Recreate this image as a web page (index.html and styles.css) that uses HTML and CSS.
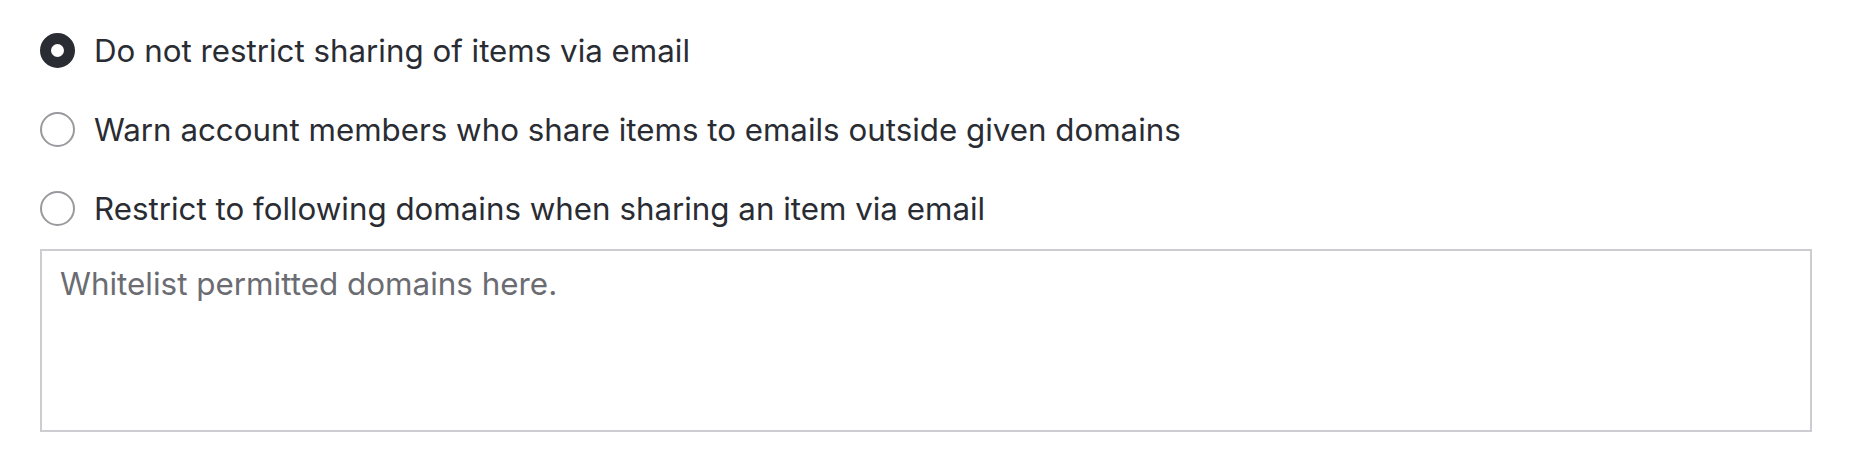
FILE: index.html
```html
<!DOCTYPE html>
<html>
<head>
<meta charset="utf-8">
<link rel="stylesheet" href="styles.css">
</head>
<body>
<div class="options">
  <label class="option">
    <span class="radio radio-checked"></span>
    <span class="label">Do not restrict sharing of items via email</span>
  </label>
  <label class="option">
    <span class="radio"></span>
    <span class="label">Warn account members who share items to emails outside given domains</span>
  </label>
  <label class="option">
    <span class="radio"></span>
    <span class="label">Restrict to following domains when sharing an item via email</span>
  </label>
  <textarea class="domains" placeholder="Whitelist permitted domains here."></textarea>
</div>
</body>
</html>
```

FILE: styles.css
```css
html, body {
  margin: 0;
  padding: 0;
  background: #ffffff;
}
body {
  font-family: Inter, "Noto Sans", sans-serif;
  color: #2a2c33;
}
.options {
  display: flex;
  flex-direction: column;
  padding: 11px 40px 0 40px;
}
.option {
  display: flex;
  align-items: center;
  gap: 19px;
  height: 79px;
}
.radio {
  box-sizing: border-box;
  width: 35px;
  height: 35px;
  border-radius: 50%;
  border: 2px solid #9a9a9e;
  flex: none;
}
.radio-checked {
  border: 11px solid #2a2c33;
  background: #ffffff;
}
.label {
  font-size: 31.3px;
  line-height: 38px;
  letter-spacing: 0;
}
.domains {
  box-sizing: border-box;
  width: 1772px;
  height: 183px;
  margin-top: 1px;
  border: 2px solid #cdcdd1;
  border-radius: 0;
  padding: 14px 18px;
  font-family: Inter, "Noto Sans", sans-serif;
  font-size: 31.4px;
  line-height: 38px;
  resize: none;
  outline: none;
}
.domains::placeholder {
  color: #6b6c72;
  opacity: 1;
}
```
